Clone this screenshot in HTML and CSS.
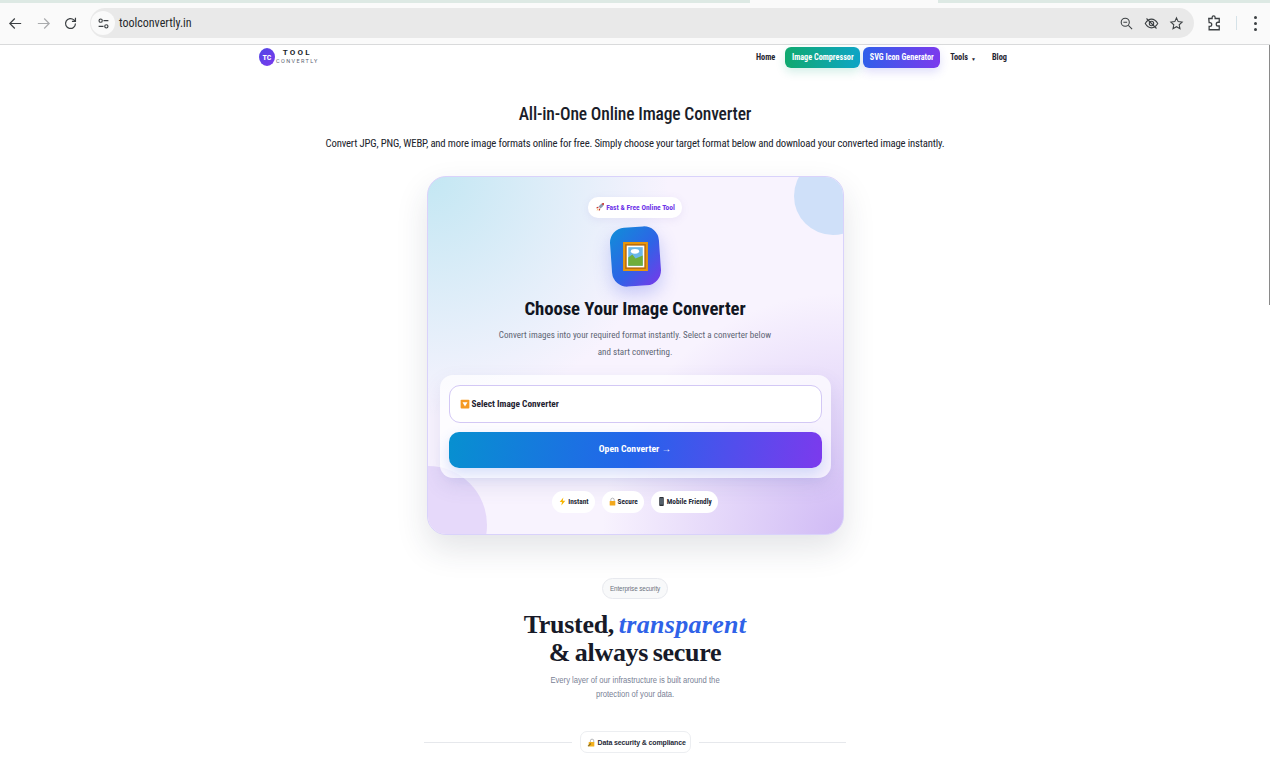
FILE: index.html
```html
<!DOCTYPE html>
<html lang="en">
<head>
<meta charset="utf-8">
<title>Tool Convertly</title>
<link rel="stylesheet" href="styles.css">
</head>
<body>
<div class="chrome">
  <div class="tabstrip"><span class="strip-a"></span><span class="strip-b"></span></div>
  <div class="toolbar">
    <svg class="tb-icon" viewBox="0 0 24 24"><path d="M20 12H5M11 5l-7 7 7 7" /></svg>
    <svg class="tb-icon dim" viewBox="0 0 24 24"><path d="M4 12h15M13 5l7 7-7 7" /></svg>
    <svg class="tb-icon" viewBox="0 0 24 24"><path d="M19 12a7 7 0 1 1-2.2-5.1L19 9M19 4v5h-5" /></svg>
    <div class="omnibox">
      <span class="tune"><svg viewBox="0 0 16 16"><circle cx="4.5" cy="4.5" r="2"/><path d="M8 4.500h6M2 11.500h6"/><circle cx="11.500" cy="11.500" r="2"/></svg></span>
      <span class="url">toolconvertly.in</span>
      <span class="omni-right">
        <svg class="om-icon" viewBox="0 0 24 24"><circle cx="10" cy="10" r="6.500"/><path d="M7 10h6M15 15l6 6"/></svg>
        <svg class="om-icon" viewBox="0 0 24 24"><path d="M2 12c3-5 6.500-7 10-7s7 2 10 7c-3 5-6.500 7-10 7s-7-2-10-7z"/><circle cx="12" cy="12" r="3.500"/><path d="M4 4l16 16"/></svg>
        <svg class="om-icon" viewBox="0 0 24 24"><path d="M12 3l2.700 6 6.300.7-4.700 4.300 1.300 6.400-5.600-3.300-5.600 3.300 1.300-6.400L3 9.700 9.300 9z"/></svg>
      </span>
    </div>
    <svg class="tb-icon ext" viewBox="0 0 24 24"><path d="M5 6h4.500V4.500a2 2 0 0 1 4 0V6H19v5h-1.500a2.500 2.500 0 0 0 0 5H19v5H5.500v-4.500H6.500a2 2 0 0 0 0-5h-1z"/></svg>
    <span class="tb-sep"></span>
    <span class="dots"><i></i><i></i><i></i></span>
  </div>
</div>
<span class="scroll-line"></span>

<div class="page">
  <nav class="nav">
    <div class="logo">
      <span class="logo-mark">TC</span>
      <span class="logo-text"><b>TOOL</b><small>CONVERTLY</small></span>
    </div>
    <div class="menu">
      <a class="link">Home</a>
      <a class="btn green">Image Compressor</a>
      <a class="btn violet">SVG Icon Generator</a>
      <a class="link tools">Tools <span class="caret">▼</span></a>
      <a class="link">Blog</a>
    </div>
  </nav>

  <h1 class="title">All-in-One Online Image Converter</h1>
  <p class="lead">Convert JPG, PNG, WEBP, and more image formats online for free. Simply choose your target format below and download your converted image instantly.</p>

  <section class="card">
    <span class="blob blob-a"></span>
    <span class="blob blob-b"></span>
    <div class="card-body">
      <span class="badge">
        <svg class="em rocket" viewBox="0 0 16 16"><path d="M14.500 1.500c-4 .3-6.800 2.500-8.500 6l2.500 2.500c3.500-1.700 5.700-4.500 6-8.500z" fill="#8a9bb0"/><path d="M14.500 1.500c-1.800.1-3 .6-4 1.300l2.700 2.700c.7-1 1.200-2.200 1.300-4z" fill="#d8352c"/><path d="M6 7.500L3 8l-1 2 3-.2zM8.500 10l-.5 3-2 1 .2-3z" fill="#c8372d"/><path d="M4.500 10.500l1 1-3 3z" fill="#f5a623"/></svg>
        Fast &amp; Free Online Tool
      </span>
      <div class="app-icon">
        <svg viewBox="0 0 24 28"><rect width="24" height="28" fill="#e8960c"/><rect x="2" y="2" width="20" height="24" fill="#b96d10"/><rect x="3.500" y="3.500" width="17" height="21" fill="#fff"/><rect x="5" y="5" width="14" height="18" fill="#6ab7e8"/><path d="M5 23v-8l4-3 3 4 7-3v10z" fill="#6fae3a"/><ellipse cx="11.500" cy="9" rx="4" ry="2.300" fill="#fff"/></svg>
      </div>
      <h2 class="card-title">Choose Your Image Converter</h2>
      <p class="card-text">Convert images into your required format instantly. Select a converter below<br>and start converting.</p>
      <div class="panel">
        <div class="select">
          <svg class="em" viewBox="0 0 16 16"><rect x="1" y="1" width="14" height="14" rx="1.500" fill="#f59a23"/><path d="M4 5h8l-4 7z" fill="#fff"/></svg>
          Select Image Converter
        </div>
        <div class="open">Open Converter →</div>
      </div>
      <div class="chips">
        <span class="chip"><svg class="em small" viewBox="0 0 16 16"><path d="M9.500 1L3 9h4l-1 6 7-8.500H8.500z" fill="#f7b500"/></svg>Instant</span>
        <span class="chip"><svg class="em small" viewBox="0 0 16 16"><path d="M5 7V5a3 3 0 0 1 6 0v2" fill="none" stroke="#a7a9ac" stroke-width="1.500"/><rect x="3" y="7" width="10" height="8" rx="1" fill="#f2a81d"/></svg>Secure</span>
        <span class="chip"><svg class="em small" viewBox="0 0 16 16"><rect x="4" y="0" width="8" height="16" rx="1.200" fill="#2e3238"/><rect x="5" y="2" width="6" height="11.500" fill="#54606b"/></svg>Mobile Friendly</span>
      </div>
    </div>
  </section>

  <section class="trust">
    <span class="pill">Enterprise security</span>
    <h2 class="trust-title">Trusted, <em>transparent</em><br>&amp; always secure</h2>
    <p class="trust-text">Every layer of our infrastructure is built around the<br>protection of your data.</p>
    <div class="divider">
      <span class="rule"></span>
      <span class="div-pill"><svg class="em" viewBox="0 0 16 16"><path d="M6 8V5a3 3 0 0 1 6 0v3" fill="none" stroke="#a7a9ac" stroke-width="1.500"/><rect x="3" y="7" width="10" height="8" rx="1" fill="#f2b01d"/><path d="M1 14l5-5 1.500 1.500L3 15z" fill="#8a6d1f"/></svg>Data security &amp; compliance</span>
      <span class="rule"></span>
    </div>
  </section>
</div>
</body>
</html>
```
FILE: styles.css
```css
* { box-sizing: border-box; }
html, body { margin: 0; height: 100%; overflow: hidden; }
body { background: #fff; font-family: Roboto, "Liberation Sans", sans-serif; font-stretch: 85%; color: #111827; }
p, h1, h2 { margin: 0; }

.chrome { height: 45px; background: #fafafa; border-bottom: 1px solid #d9dadb; }
.tabstrip { height: 3px; display: flex; justify-content: space-between; background: #fafafa; }
.strip-a { width: 750px; background: #dde9e4; }
.strip-b { width: 332px; background: #dde9e4; }
.toolbar { height: 41px; display: flex; align-items: center; padding: 0 5px 1px 7px; }
.toolbar svg { fill: none; stroke: #3c4043; stroke-width: 1.700; }
.tb-icon { width: 17px; height: 17px; margin-right: 11px; flex: none; }
.toolbar .tb-icon.dim { stroke: #a9abad; margin-right: 10px; }
.omnibox { flex: 1; height: 30px; border-radius: 15px; background: #e9e9e9; display: flex; align-items: center; padding: 0 10px 0 1px; }
.tune { width: 24px; height: 24px; border-radius: 50%; background: #fafafa; display: flex; align-items: center; justify-content: center; }
.tune svg { width: 13px; height: 13px; stroke-width: 1.400; }
.url { margin-left: 4px; font-size: 12px; color: #26282b; }
.omni-right { margin-left: auto; display: flex; gap: 10px; }
.om-icon { width: 15px; height: 15px; }
.toolbar .ext { width: 18px; height: 18px; margin: 0 0 0 11px; }
.tb-sep { width: 1px; height: 14px; background: #d5e2e8; margin: 0 17px 0 13px; }
.dots { display: flex; flex-direction: column; gap: 3px; margin-right: 8px; }
.dots i { width: 3px; height: 3px; border-radius: 50%; background: #3c4043; }
.scroll-line { position: absolute; right: 0; top: 45px; width: 1px; height: 260px; background: #8a8a8a; }

.page { display: flex; flex-direction: column; align-items: center; }

.nav { width: 748px; height: 24px; margin-right: 4px; display: flex; align-items: center; justify-content: space-between; }
.logo { display: flex; align-items: center; gap: 1px; }
.logo-mark { width: 16px; height: 18px; border-radius: 50%; background: linear-gradient(135deg, #4f46e5, #7c3aed); color: #fff; font-size: 8px; font-weight: 700; display: flex; align-items: center; justify-content: center; }
.logo-text { display: flex; flex-direction: column; align-items: center; line-height: 8.500px; font-stretch: 100%; }
.logo-text b { font-size: 8px; letter-spacing: 2.200px; color: #1a1e2a; }
.logo-text small { font-size: 5.500px; letter-spacing: 1.400px; color: #5b6270; }
.menu { display: flex; align-items: center; }
.link { font-size: 8.300px; font-weight: 700; color: #1f2430; white-space: nowrap; }
.tools { margin-right: 16px; }
.caret { font-size: 5px; vertical-align: -1px; margin-left: 1px; }
.btn { height: 21px; border-radius: 6px; display: flex; align-items: center; justify-content: center; color: #fff; font-size: 8.200px; font-weight: 700; white-space: nowrap; }
.green { width: 75px; margin: 0 3px 0 10px; background: linear-gradient(90deg, #10a96f, #0ea5c6); box-shadow: 0 4px 10px rgba(16,169,130,.18); }
.violet { width: 77px; margin-right: 10px; background: linear-gradient(90deg, #2f5fea, #7c3aed); box-shadow: 0 4px 10px rgba(79,70,229,.18); }

.title { margin-top: 33px; font-size: 17.500px; letter-spacing: -.15px; font-weight: 500; line-height: 24px; color: #1a1d29; }
.lead { margin-top: 11px; font-size: 10.700px; letter-spacing: -.16px; line-height: 14px; color: #20232c; white-space: nowrap; }

.card { position: relative; width: 417px; height: 359px; margin-top: 25px; border-radius: 19px; overflow: hidden; border: 1px solid #d9d2fb; box-shadow: 0 14px 32px rgba(40,50,70,.13); background: radial-gradient(circle at 0 0, #c3e7f3 0, rgba(195,231,243,0) 44%), radial-gradient(circle at 100% 100%, #d0baf5 0, rgba(208,186,245,0) 44%), #f8f3fe; }
.blob { position: absolute; border-radius: 50%; }
.blob-a { width: 78px; height: 78px; right: -29px; top: -20px; background: #cfe0f9; }
.blob-b { width: 118px; height: 118px; left: -59px; bottom: -50px; background: #e6d9fa; }
.card-body { position: relative; display: flex; flex-direction: column; align-items: center; }
.badge { height: 21px; margin-top: 20px; padding: 0 7px 1px; border-radius: 10px; background: #fff; box-shadow: 0 2px 8px rgba(120,100,200,.1); display: flex; align-items: center; gap: 1px; font-size: 7.500px; font-weight: 700; color: #6d35e8; white-space: nowrap; }
.em { width: 9px; height: 9px; flex: none; }
.em.rocket { width: 10px; height: 10px; }
.em.small { width: 9px; height: 11px; }
.app-icon { width: 49px; height: 59px; margin-top: 9px; border-radius: 15px; background: linear-gradient(135deg, #0f8fd8, #2f63e6 55%, #7a37ea); box-shadow: 0 8px 18px rgba(70,90,230,.28); display: flex; align-items: center; justify-content: center; transform: rotate(-4deg); }
.app-icon svg { width: 25px; height: 29px; transform: rotate(4deg); }
.card-title { margin-top: 10px; font-size: 18.800px; letter-spacing: -.11px; line-height: 27px; font-weight: 700; color: #111522; white-space: nowrap; }
.card-text { margin-top: 4px; font-size: 9px; letter-spacing: .04px; line-height: 17px; text-align: center; color: #5d6473; }
.panel { width: 391px; height: 103px; margin-top: 14px; padding: 10px 9px; border-radius: 13px; background: rgba(255,255,255,.72); box-shadow: 0 8px 20px rgba(80,90,160,.12); display: flex; flex-direction: column; gap: 9px; }
.select { height: 38px; padding: 0 10px 1px; border: 1px solid #d3c8f5; border-radius: 11px; background: #fff; display: flex; align-items: center; gap: 2px; font-size: 9.300px; font-weight: 700; color: #1e2230; }
.select .em { width: 10px; height: 10px; }
.open { height: 36px; padding-bottom: 3px; border-radius: 10px; background: linear-gradient(100deg, #0790d0, #2563eb 50%, #7c3aed); display: flex; align-items: center; justify-content: center; font-size: 9.700px; font-weight: 700; color: #fff; box-shadow: 0 6px 14px rgba(60,110,230,.2); }
.chips { margin-top: 13px; display: flex; gap: 7px; }
.chip { height: 22px; padding: 0 6px 1px; border-radius: 11px; background: #fff; display: flex; align-items: center; gap: 1px; font-size: 7.300px; font-weight: 700; color: #252936; white-space: nowrap; }

.trust { display: flex; flex-direction: column; align-items: center; }
.pill { height: 21px; margin-top: 43px; padding: 0 7px; border: 1px solid #e7e9ee; border-radius: 11px; background: #f8f9fa; display: flex; align-items: center; font-family: "Liberation Sans", sans-serif; font-size: 6.300px; letter-spacing: -.1px; color: #6c7280; }
.trust-title { margin-top: 12px; font-family: "Liberation Serif", serif; font-size: 26px; letter-spacing: -.3px; word-spacing: -1.500px; line-height: 28px; font-weight: 700; text-align: center; color: #171a28; }
.trust-title em { color: #2f62e8; font-style: italic; letter-spacing: .3px; }
.trust-text { margin-top: 6px; font-family: "Liberation Sans", sans-serif; font-size: 8.500px; line-height: 14px; text-align: center; color: #7a8296; transform: scaleX(.9); }
.divider { width: 422px; margin-top: 30px; display: flex; align-items: center; gap: 8px; }
.rule { flex: 1; height: 1px; background: #e6e8ec; }
.div-pill { width: 111px; height: 22px; padding: 0 6px; border: 1px solid #eceef1; border-radius: 7px; background: #fff; display: flex; align-items: center; gap: 2px; font-family: "Liberation Sans", sans-serif; font-size: 7px; letter-spacing: -.12px; font-weight: 700; color: #262a38; white-space: nowrap; }
```
